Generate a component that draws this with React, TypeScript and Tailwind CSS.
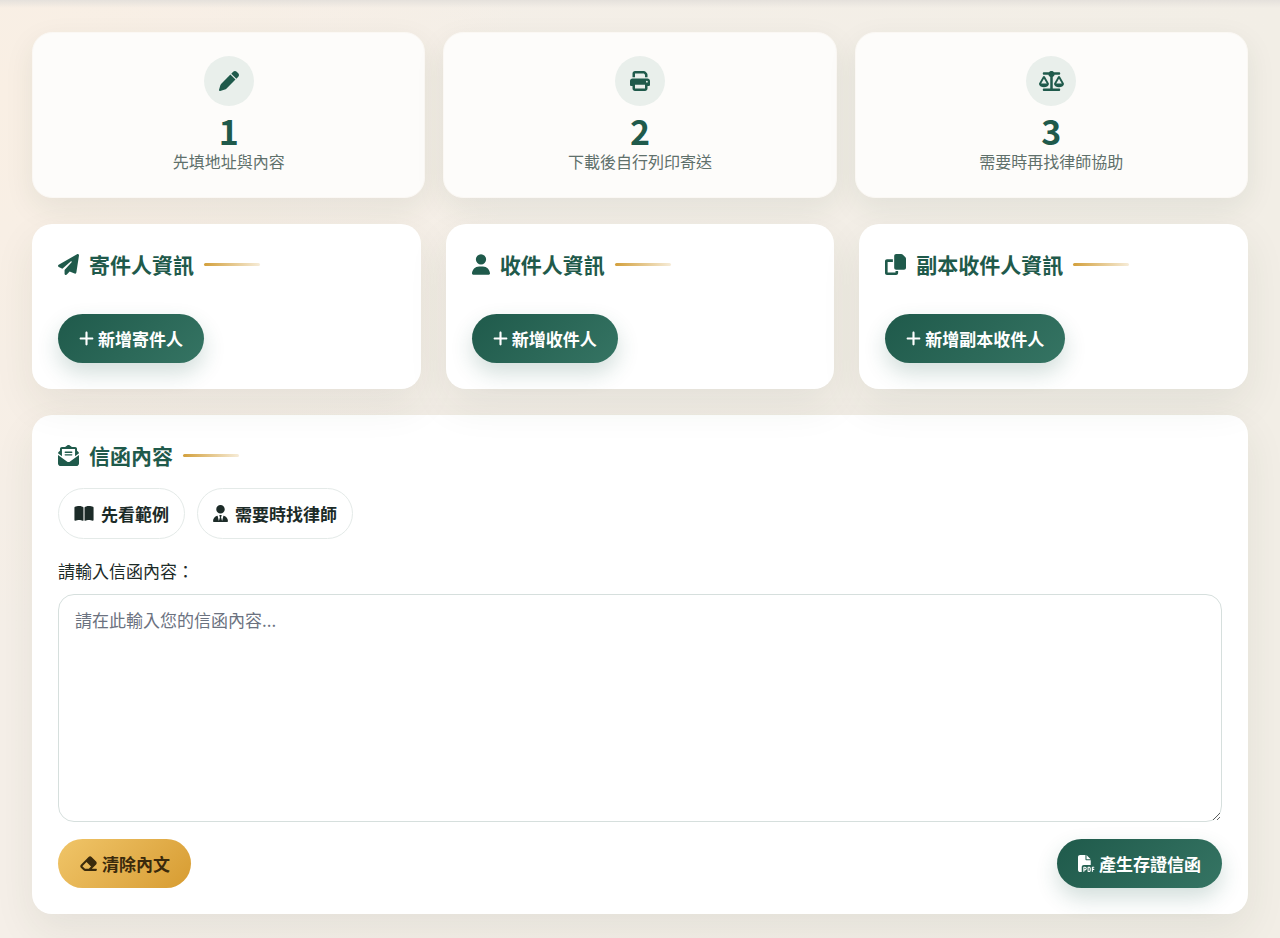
import { useState, ReactNode } from "react"
import { FaPen, FaPrint, FaScaleBalanced, FaPaperPlane, FaUser, FaPlus, FaEnvelopeOpenText, FaBookOpen, FaUserTie, FaEraser, FaFilePdf } from "react-icons/fa6";

const steps = [
    { number: "1", text: "先填地址與內容", icon: <FaPen className="size-5" /> },
    { number: "2", text: "下載後自行列印寄送", icon: <FaPrint className="size-5" /> },
    { number: "3", text: "需要時再找律師協助", icon: <FaScaleBalanced className="h-5 w-[25px]" /> },
];

const parties = [
    { title: "寄件人資訊", button: "新增寄件人", icon: <FaPaperPlane className="size-[21px]" /> },
    { title: "收件人資訊", button: "新增收件人", icon: <FaUser className="h-[21px] w-[18px]" /> },
    { title: "副本收件人資訊", button: "新增副本收件人", icon: <CopyIcon /> },
];

export default function App() {
    const [content, setContent] = useState<string>("");

    return <div className="min-h-screen bg-[#f4eee6] bg-[radial-gradient(circle_at_0%_10%,#f9efe4_0%,transparent_35%),linear-gradient(90deg,#f5efe8,#f2eee6)] font-['Noto_Sans_CJK_TC','Noto_Sans',sans-serif] text-[17px] leading-[26px] text-[#1c2b28]">
        <div className="h-2 bg-linear-to-b from-[#e5e1dc] to-transparent"></div>
        <main className="space-y-[26px] px-8 pt-6 pb-6">
            <div className="grid grid-cols-3 gap-[18px]">
                {steps.map((step) => <StepCard key={step.number} {...step} />)}
            </div>
            <div className="grid grid-cols-3 gap-[25px]">
                {parties.map((party) => <Panel key={party.title}>
                    <SectionTitle icon={party.icon} title={party.title} />
                    <div className="mt-9 flex">
                        <PrimaryButton icon={<FaPlus className="h-[17px] w-[15px]" />} name={party.button} />
                    </div>
                </Panel>)}
            </div>
            <Panel>
                <SectionTitle icon={<FaEnvelopeOpenText className="size-[21px]" />} title="信函內容" />
                <div className="mt-[19px] flex flex-wrap gap-3">
                    <OutlineButton icon={<FaBookOpen className="h-[17px] w-5" />} name="先看範例" />
                    <OutlineButton icon={<FaUserTie className="h-[17px] w-[15px]" />} name="需要時找律師" />
                </div>
                <label htmlFor="content" className="mt-[19px] block">請輸入信函內容：</label>
                <textarea
                    id="content"
                    name="content"
                    value={content}
                    onChange={(e) => setContent(e.target.value)}
                    placeholder="請在此輸入您的信函內容..."
                    className="mt-[10px] block h-[228px] w-full resize-y rounded-2xl border border-[#d6dfdd] bg-white px-4 py-3 placeholder:text-[#6b7280]"
                />
                <div className="mt-[17px] flex items-center justify-between">
                    <button onClick={() => setContent("")} className="flex h-[49px] items-center gap-1 rounded-full bg-linear-135 from-[#f0c568] to-[#d79c30] px-[21px] font-bold text-[#3a2a0c]">
                        <FaEraser className="h-[17px] w-[19px]" />
                        <span>清除內文</span>
                    </button>
                    <PrimaryButton icon={<FaFilePdf className="size-[17px]" />} name="產生存證信函" />
                </div>
            </Panel>
        </main>
    </div>
}

function StepCard({ number, text, icon }: { number: string, text: string, icon: ReactNode }) {
    return <div className="flex flex-col items-center rounded-[20px] border border-[#fbf8f4] bg-[#fdfcfa] pt-[23px] pb-6 shadow-[0_10px_30px_rgba(30,60,40,0.08)]">
        <div className="flex size-[50px] items-center justify-center rounded-full bg-[#e9efeb] text-[#1f5a4b]">{icon}</div>
        <div className="mt-2 text-[34px] leading-[34px] font-bold text-[#1f5a4b]">{number}</div>
        <div className="mt-px text-base leading-6 text-[#5f706b]">{text}</div>
    </div>
}

function Panel({ children }: { children: ReactNode }) {
    return <section className="rounded-[20px] bg-white p-[26px] shadow-[0_16px_40px_rgba(40,60,35,0.08)]">
        {children}
    </section>
}

function SectionTitle({ icon, title }: { icon: ReactNode, title: string }) {
    return <h2 className="flex h-7 items-center gap-[10px] text-[21px] font-bold text-[#1f5a4b]">
        {icon}
        <span>{title}</span>
        <span className="h-[3px] w-14 rounded-full bg-linear-to-r from-[#d3a03c] to-[#d3a03c]/20"></span>
    </h2>
}

function PrimaryButton({ icon, name }: { icon: ReactNode, name: string }) {
    return <button className="flex h-[49px] items-center gap-1 rounded-full bg-linear-135 from-[#1f5a4b] to-[#357463] px-[21px] font-bold text-white shadow-[0_10px_22px_rgba(31,90,75,0.2)]">
        {icon}
        <span>{name}</span>
    </button>
}

function OutlineButton({ icon, name }: { icon: ReactNode, name: string }) {
    return <button className="flex h-[51px] items-center gap-[7px] rounded-full border border-[#e4eae8] bg-white px-[15px] font-bold">
        {icon}
        <span>{name}</span>
    </button>
}

function CopyIcon() {
    return <svg viewBox="0 0 512 512" className="size-[21px]" fill="currentColor">
        <path d="M272 0H396.1c12.7 0 24.9 5.1 33.9 14.1l67.9 67.9c9 9 14.1 21.2 14.1 33.9V336c0 26.5-21.5 48-48 48H272c-26.5 0-48-21.5-48-48V48c0-26.5 21.5-48 48-48zM48 128H192v64H64V448H256V416h64v48c0 26.5-21.5 48-48 48H48c-26.5 0-48-21.5-48-48V176c0-26.5 21.5-48 48-48z" />
    </svg>
}
